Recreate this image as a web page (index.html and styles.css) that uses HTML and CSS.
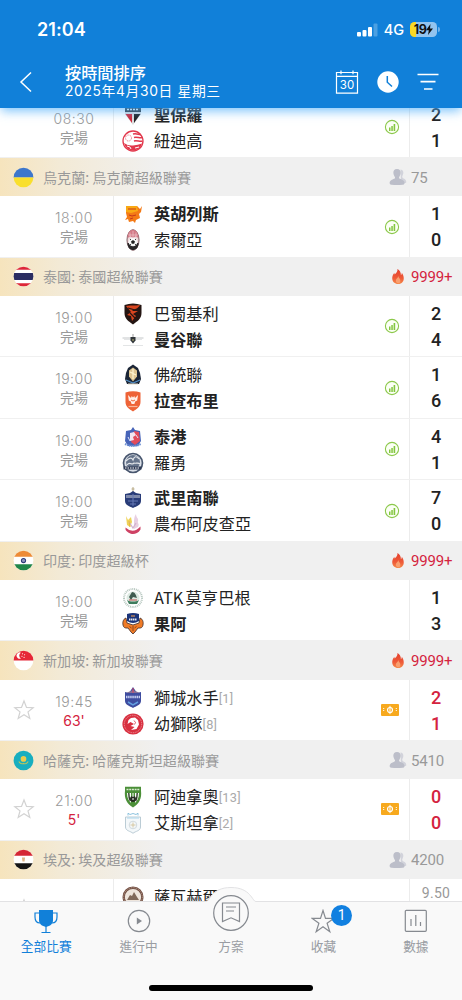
FILE: index.html
```html
<!DOCTYPE html>
<html lang="zh-Hant">
<head>
<meta charset="utf-8">
<title>按時間排序</title>
<link rel="stylesheet" href="styles.css">
</head>
<body>
<svg class="defs" width="0" height="0">
  <defs>
    <clipPath id="disc"><circle cx="10" cy="10" r="9.4"/></clipPath>
    <linearGradient id="flame" x1="0" y1="0" x2="0" y2="1"><stop offset="0" stop-color="#e4402e"/><stop offset=".6" stop-color="#ee5a38"/><stop offset="1" stop-color="#f58a4a"/></linearGradient>
    <symbol id="i-chart" viewBox="0 0 16 16"><circle cx="8" cy="8" r="6.6" fill="#fbfff5" stroke="#8cc84b" stroke-width="1.1"/><path d="M5 8.500h1.500v3.500H5zM7.300 7h1.500v5H7.300zM9.600 5h1.600v7H9.600z" fill="#83c63f"/></symbol>
    <symbol id="i-fire" viewBox="0 0 14 18"><path d="M6.300 1C7 4 4.600 5.300 3.600 7 3.200 6.300 3.100 5.700 3.200 5 1.400 7 .8 9.200.9 11.200 1.100 14.600 3.600 17 7 17s5.900-2.300 6.100-5.700C13.200 8.800 12.300 6.700 11 5c.1 1.200-.2 2-.9 2.500C10.200 4.700 8.800 2.300 6.300 1z" fill="url(#flame)"/><path d="M7.200 8.500c.2 2-2.500 2.700-2.500 5 0 1.600 1 2.700 2.400 2.700s2.500-1.100 2.400-2.800c-.1-2-1.900-2.900-2.300-4.900z" fill="#f9a070"/></symbol>
    <symbol id="i-people" viewBox="0 0 18 18"><path d="M11.500 1.500c3 .2 3.500 3.400 2.100 6-.5 1-.6 2 .4 2.700 1.700.9 3.100 1.300 3.300 3.800 0 .8-.5 1-1.400 1H12z" fill="#d2d3db"/><path d="M8 1c2.800 0 3.900 2 3.600 4.300-.2 1.700-.8 2.700-1.400 3.600-.3.900 0 1.500.7 1.900 2.200 1 4.500 1.400 4.700 4.200 0 1.300-1 1.700-2 1.800-3.500.4-7.500.4-11 0-1-.1-2-.5-2-1.800.2-2.800 2.500-3.200 4.600-4.200.8-.4 1-1 .7-1.900C5.200 8 4.700 7 4.400 5.300 4.100 3 5.200 1 8 1z" fill="#bcbec9"/></symbol>
    <symbol id="i-ticket" viewBox="0 0 18 12"><rect width="18" height="12" rx="1" fill="#f7a91e"/><path d="M2.700 4v4M15.300 4v4" stroke="#fff" stroke-width="1" stroke-dasharray="1 1"/><circle cx="9" cy="6" r="2.500" fill="none" stroke="#fff" stroke-width="1.200"/><path d="M9 1.800v8.400" stroke="#fff" stroke-width="1"/></symbol>
    <symbol id="i-star" viewBox="0 0 22 22"><path d="M11 2l2.500 6.400 6.700.3-5.200 4.200 1.800 6.600L11 15.800l-5.800 3.700L7 12.900 1.800 8.700l6.700-.3z" fill="none" stroke="currentColor" stroke-width="1.200" stroke-linejoin="miter"/></symbol>
  </defs>
</svg>
<div class="app">
  <header class="header">
    <div class="status">
      <span class="clock">21:04</span>
      <div class="signals">
        <svg width="21" height="14" viewBox="0 0 21 14"><g fill="#fff"><rect x="0" y="9" width="4" height="4.500" rx="1"/><rect x="5.500" y="7" width="4" height="6.500" rx="1"/><rect x="11" y="4" width="4" height="9.500" rx="1"/><rect x="16.500" y=".5" width="4" height="13" rx="1" opacity=".25"/></g></svg>
        <span class="net">4G</span>
        <span class="battery"><span class="pct">19</span><svg width="7" height="11" viewBox="0 0 7 11"><path d="M4.500 0L0 6.200h2.800L2 11l5-6.500H4z" fill="#111"/></svg></span><i class="cap"></i>
      </div>
    </div>
    <div class="titlebar">
      <svg class="back" width="14" height="22" viewBox="0 0 14 22"><path d="M12 1.500L2 11l10 9.500" fill="none" stroke="#fff" stroke-width="1.500"/></svg>
      <div class="titles"><div class="title">按時間排序</div><div class="date">2025年4月30日 星期三</div></div>
      <div class="tools">
        <span class="cal"><svg width="24" height="24" viewBox="0 0 24 24"><path d="M1.500 2.500h21v20.700h-21zM1.500 6.400h21M6 .5v3.700M18 .5v3.700" fill="none" stroke="#fff" stroke-width="1.200"/></svg><b>30</b></span>
        <svg width="22" height="22" viewBox="0 0 22 22"><circle cx="11" cy="11" r="10.700" fill="#fff"/><path d="M10.300 5v6.200l4.700 4.300" fill="none" stroke="#1180d9" stroke-width="1.500"/></svg>
        <svg width="22" height="20" viewBox="0 0 22 20"><path d="M.5 2.500h21M3.500 9.700h15M7 17h8.500" stroke="#fff" stroke-width="1.700"/></svg>
      </div>
    </div>
  </header>

  <main class="list">
    <section class="match first"><div class="fav"></div><div class="when"><span>08:30</span><span>完場</span></div>
      <div class="teams">
        <div class="team win"><svg class="crest" viewBox="0 0 22 22"><path d="M3 3h16v7l-8 11L3 10z" fill="#ddd"/><path d="M3 3h16v5H3z" fill="#333"/><path d="M3.500 10H10v9z" fill="#d22739"/><path d="M12 10h6.500L12 19z" fill="#222"/><path d="M5 5.500h12" stroke="#fff" stroke-width="1.500" stroke-dasharray="2 1"/></svg><span>聖保羅</span></div>
        <div class="team"><svg class="crest" viewBox="0 0 22 22"><circle cx="11" cy="11" r="10" fill="#fff" stroke="#e2384c" stroke-width="1.300"/><path d="M2 13q4 3 9 2.500t9-2c-1 4.500-5 7-9 7s-8-3-9-7.500z" fill="#e2384c"/><path d="M11 4c4-1 6 1 8 .5M12 7.500c3-1 6 1 8.500 0M12 11c3-1 6 1 8.500 0" fill="none" stroke="#e2384c" stroke-width="1.700"/><circle cx="6.500" cy="8" r="3" fill="none" stroke="#ec7080" stroke-dasharray="1 .7"/><path d="M5 16l3 1 1 2M13 18l4-1" stroke="#fff" fill="none"/></svg><span>紐迪高</span></div>
      </div><div class="tag"><svg class="chart"><use href="#i-chart"/></svg></div><div class="score"><span>2</span><span>1</span></div></section>

    <div class="league"><svg class="flag" viewBox="0 0 20 20"><g clip-path="url(#disc)"><path fill="#3d77cc" d="M0 0h20v10H0z"/><path fill="#f9df2d" d="M0 10h20v10H0z"/></g></svg><span class="name">烏克蘭: 烏克蘭超級聯賽</span><div class="heat"><svg class="people"><use href="#i-people"/></svg><span>75</span></div></div>
    <section class="match"><div class="fav"></div><div class="when"><span>18:00</span><span>完場</span></div>
      <div class="teams">
        <div class="team win"><svg class="crest" viewBox="0 0 22 22"><path d="M4 3l5 1 6-1 3 3 2-3-1 6-2 2 1 4-4 2-1 3-2-2-4 1-1-3-3 1 2-3-1-4z" fill="#f47a16"/><path d="M4 3h11l1 5-7 2-5-1z" fill="#f9a914"/><path d="M6 6h8M7 12l3 1 4-1M8 16l3-1" stroke="#c8381a" stroke-width="1" fill="none"/></svg><span>英胡列斯</span></div>
        <div class="team"><svg class="crest" viewBox="0 0 22 22"><ellipse cx="11" cy="11" rx="6" ry="10.300" fill="#eed9db" stroke="#806065"/><path d="M5.500 9c0-11 11-11 11 0l-3-1.500-2.500 1-2.500-1z" fill="#d37a87"/><path d="M5.500 14h11c0 5-3 7-5.500 7s-5.500-2-5.500-7z" fill="#292729"/><path d="M6.500 6h9M8 3.500v5M11 2v6M14 3.500v5" stroke="#f4d4d8" stroke-width=".6"/><circle cx="11" cy="13" r="4.300" fill="#f8f8f8"/><path d="M11 11l2 1.500-.8 2.300H9.800L9 12.500z" fill="#222"/><path d="M8 11l1-1M14 11l-1-1M8 16l1-1M14 16l-1-1" stroke="#444"/></svg><span>索爾亞</span></div>
      </div><div class="tag"><svg class="chart"><use href="#i-chart"/></svg></div><div class="score"><span>1</span><span>0</span></div></section>

    <div class="league"><svg class="flag" viewBox="0 0 20 20"><g clip-path="url(#disc)"><path fill="#fff" d="M0 0h20v20H0z"/><path fill="#dd2739" d="M0 0h20v3.500H0zM0 16.500h20V20H0z"/><path fill="#2b2d62" d="M0 6.700h20v6.600H0z"/></g></svg><span class="name">泰國: 泰國超級聯賽</span><div class="heat hot"><svg class="fire"><use href="#i-fire"/></svg><span>9999+</span></div></div>
    <section class="match"><div class="fav"></div><div class="when"><span>19:00</span><span>完場</span></div>
      <div class="teams">
        <div class="team"><svg class="crest" viewBox="0 0 22 22"><path d="M2.500 2Q11-1 19.500 2v8c0 6-4 8-8.500 11.500C6.500 18 2.500 16 2.500 10z" fill="#241512"/><path d="M4 3c5-1 9 0 14-1-2 4-6 4-8 6l6 0-5 3 3 2-4 5-1-5-4-1 4-3z" fill="#d8451f"/><path d="M6 5l7 2M8 10l5 5" stroke="#241512" stroke-width="1.200"/></svg><span>巴蜀基利</span></div>
        <div class="team win"><svg class="crest" viewBox="0 0 22 22"><path d="M.5 9h21" stroke="#b4b8ba" stroke-width=".8"/><path d="M2 10.500h18M1 16.500h20" stroke="#dcdedf" stroke-width=".8"/><path d="M8.500 8h5v3.500L11 14.500l-2.500-3z" fill="#31363a"/><path d="M11 5v3" stroke="#777" stroke-width=".7"/><circle cx="11" cy="11" r="1" fill="#8c8d60"/></svg><span>曼谷聯</span></div>
      </div><div class="tag"><svg class="chart"><use href="#i-chart"/></svg></div><div class="score"><span>2</span><span>4</span></div></section>
    <section class="match"><div class="fav"></div><div class="when"><span>19:00</span><span>完場</span></div>
      <div class="teams">
        <div class="team"><svg class="crest" viewBox="0 0 22 22"><path d="M11 .5l5 3.500 2 5 1 6-2 5H5l-2-5 1-6 2-5z" fill="#1b2536"/><path d="M11 3.500l4 3v6l-4 5-4-5v-6z" fill="#dfc692"/><path d="M11 5v10M8 8l6 3" stroke="#fff5d2" stroke-width="1.200"/><path d="M4 16l7 3 7-3" fill="none" stroke="#528dc3" stroke-width="1.300"/><path d="M6 20h10" stroke="#ded7c6"/></svg><span>佛統聯</span></div>
        <div class="team win"><svg class="crest" viewBox="0 0 22 22"><path d="M3.500 2.500Q11 0 18.500 2.500V12c0 5-4 7-7.500 9.500C7.500 19 3.500 17 3.500 12z" fill="#ee6337"/><path d="M6 5l3 3 .7-2L11 7.500 12.300 6l.7 2 3-3-.8 5.500-2 1-.8 2.500h-2.800l-.8-2.500-2-1z" fill="#fff0e9"/><path d="M6.500 16.500h9" stroke="#f9b79d" stroke-width="1.200"/><path d="M9 10l2 1 2-1" fill="none" stroke="#ee6337"/></svg><span>拉查布里</span></div>
      </div><div class="tag"><svg class="chart"><use href="#i-chart"/></svg></div><div class="score"><span>1</span><span>6</span></div></section>
    <section class="match"><div class="fav"></div><div class="when"><span>19:00</span><span>完場</span></div>
      <div class="teams">
        <div class="team win"><svg class="crest" viewBox="0 0 22 22"><path d="M4 5l5-1 2-3 2 3 5 1 1 10-3 5H6l-3-5z" fill="#4764b8"/><path d="M12 5l5 1 1 9-5 4-4-3z" fill="#e24b5b"/><path d="M8 7l4-1 2 3-3 2 1 3-4 1z" fill="#f3e5f0"/><path d="M6 11l2 4M14 9l2 3" stroke="#dfe4f8"/><path d="M3 18q8 4 16 0" stroke="#7192d4" stroke-width="2" stroke-dasharray="1.500 .6" fill="none"/></svg><span>泰港</span></div>
        <div class="team"><svg class="crest" viewBox="0 0 22 22"><circle cx="11" cy="11" r="9.500" fill="#dbe0e8" stroke="#48566e" stroke-width="1.700"/><circle cx="11" cy="10" r="7" fill="#66748b"/><path d="M4 9q5-5 7-1 2-6 6-1M5 13c3-4 5 1 7-2 2 1 4-1 6 1" stroke="#e5e8ec" stroke-width="1.200" fill="none"/><path d="M1.500 16h18" stroke="#2e3a55" stroke-width="3"/><path d="M3 16h15" stroke="#fff" stroke-width="1" stroke-dasharray="1.500 1"/></svg><span>羅勇</span></div>
      </div><div class="tag"><svg class="chart"><use href="#i-chart"/></svg></div><div class="score"><span>4</span><span>1</span></div></section>
    <section class="match"><div class="fav"></div><div class="when"><span>19:00</span><span>完場</span></div>
      <div class="teams">
        <div class="team win"><svg class="crest" viewBox="0 0 22 22"><path d="M11 0v6M9.500 2h3" stroke="#b0a079" stroke-width=".9"/><path d="M3 7l5-1 3-2 3 2 5 1v7c0 4-4 5-8 7-4-2-8-3-8-7z" fill="#293c78"/><path d="M4 8h14v3H4z" fill="#7f8aab"/><path d="M6 14h10M8 17h6M11 7v12" stroke="#6678b4" stroke-width="1"/></svg><span>武里南聯</span></div>
        <div class="team"><svg class="crest" viewBox="0 0 22 22"><path d="M4 3l2 4 3-3 1 5-2 5-3-2z" fill="#efd256"/><path d="M12 10c0-4 0-6 2-9 0 4 3 4 2 7-1 2 2 3 0 6l-4 2z" fill="#e8cfe2"/><path d="M3.500 14.500q7.500 7 15-1v3c-2 3.500-5 4.500-7.500 4.500s-6.500-2-7.500-4.500z" fill="#ce4164"/><path d="M7 9l4 6 3-5" stroke="#d3b4cf" fill="none" stroke-width="1.300"/><path d="M7 8l1 6" stroke="#e8b93c"/></svg><span>農布阿皮查亞</span></div>
      </div><div class="tag"><svg class="chart"><use href="#i-chart"/></svg></div><div class="score"><span>7</span><span>0</span></div></section>

    <div class="league"><svg class="flag" viewBox="0 0 20 20"><g clip-path="url(#disc)"><path fill="#fff" d="M0 0h20v20H0z"/><path fill="#ed8b36" d="M0 0h20v6.500H0z"/><path fill="#20864a" d="M0 13.500h20V20H0z"/><circle cx="10" cy="10" r="2" fill="#8d96be" stroke="#303d7b"/></g></svg><span class="name">印度: 印度超級杯</span><div class="heat hot"><svg class="fire"><use href="#i-fire"/></svg><span>9999+</span></div></div>
    <section class="match"><div class="fav"></div><div class="when"><span>19:00</span><span>完場</span></div>
      <div class="teams">
        <div class="team"><svg class="crest" viewBox="0 0 22 22"><circle cx="11" cy="11" r="9" fill="none" stroke="#b8c8c0" stroke-width="2" stroke-dasharray="1 .8"/><circle cx="11" cy="11" r="6.500" fill="#dce9e1"/><path d="M5 13c3 2 9 2 12 0l-2 4H7z" fill="#3d7b5c"/><path d="M10 5c3 0 4 3 5 6l-4-1-2 3-2-3z" fill="#405b50"/><path d="M7 13h8" stroke="#bd4c4c"/></svg><span class="latin">ATK<i></i>莫亨巴根</span></div>
        <div class="team win"><svg class="crest" viewBox="0 0 22 22"><path d="M4 5C1 6 0 10 1.500 13.500 2.500 15.500 5 15 6 15l3 4 2 2 2-2 3-4c1 0 3.500.5 4.500-1.500C22 10 21 6 18 5l-1 5-6 2-6-2z" fill="#ef7b27" stroke="#412d2b" stroke-width=".8"/><path d="M5 1q6-2 12 0v7q-6 4-12 0z" fill="#1b3479"/><path d="M7 6.500h8" stroke="#e5e8f3" stroke-width="2" stroke-dasharray="1.500 .5"/><path d="M9 3h4" stroke="#f8a14e"/><path d="M7.500 13.500l2 1.500M14.500 13.500l-2 1.500M11 13v5" stroke="#793716" stroke-width=".8"/></svg><span>果阿</span></div>
      </div><div class="tag"></div><div class="score"><span>1</span><span>3</span></div></section>

    <div class="league"><svg class="flag" viewBox="0 0 20 20"><g clip-path="url(#disc)"><path fill="#fff" d="M0 0h20v20H0z"/><path fill="#e62737" d="M0 0h20v10H0z"/><path d="M7.500 2.500a3 3 0 1 0 0 5.500 3.200 3.200 0 0 1 0-5.500z" fill="#fff"/><path d="M9 3.500h.1M11 4.500h.1M8.500 6h.1M10.500 7h.1" stroke="#fff" stroke-linecap="round"/></g></svg><span class="name">新加坡: 新加坡聯賽</span><div class="heat hot"><svg class="fire"><use href="#i-fire"/></svg><span>9999+</span></div></div>
    <section class="match live"><div class="fav"><svg><use href="#i-star"/></svg></div><div class="when"><span>19:45</span><span>63'</span></div>
      <div class="teams">
        <div class="team"><svg class="crest" viewBox="0 0 22 22"><path d="M3 5l4 1 4-6 4 6 4-1v9c0 4-5 5-8 7-3-2-8-3-8-7z" fill="#3e4c9f"/><path d="M4 6h14L11 3z" fill="#827196"/><path d="M4 10h14" stroke="#c3cdf1" stroke-width="2.500" stroke-dasharray="1.500 .6"/><path d="M6 15l5 3 5-3" stroke="#639fe0" fill="none" stroke-width="1.500"/><path d="M11 1v5" stroke="#d94565"/></svg><span>獅城水手</span><small>[1]</small></div>
        <div class="team"><svg class="crest" viewBox="0 0 22 22"><circle cx="11" cy="11" r="10.600" fill="#d83040"/><circle cx="11" cy="11" r="8.700" fill="none" stroke="#f3a9af" stroke-width=".8" stroke-dasharray="1 .8"/><path d="M9 5l4-.5 3 2.500 1 4.500-2.500 4.500-5.500 1 3.500-3-4-1 3.500-2-3.500-2-3 2 1-4z" fill="#fff"/><path d="M12 7.500l1.500 2-1 2" stroke="#d83040" stroke-width=".8" fill="none"/></svg><span>幼獅隊</span><small>[8]</small></div>
      </div><div class="tag"><svg class="ticket"><use href="#i-ticket"/></svg></div><div class="score"><span>2</span><span>1</span></div></section>

    <div class="league"><svg class="flag" viewBox="0 0 20 20"><g clip-path="url(#disc)"><path fill="#18aebf" d="M0 0h20v20H0z"/><circle cx="10" cy="8.500" r="2.700" fill="#eacb4c"/><path d="M5.500 11c1.500 2.500 3 2.500 4.500 1.800 1.500.7 3 .7 4.500-1.800" stroke="#b9c65c" fill="none" stroke-width="1"/></g></svg><span class="name">哈薩克: 哈薩克斯坦超級聯賽</span><div class="heat"><svg class="people"><use href="#i-people"/></svg><span>5410</span></div></div>
    <section class="match live"><div class="fav"><svg><use href="#i-star"/></svg></div><div class="when"><span>21:00</span><span>5'</span></div>
      <div class="teams">
        <div class="team"><svg class="crest" viewBox="0 0 22 22"><path d="M3 .8h16v4c1 8-2 13-8 16.700C5 17.800 2 12.800 3 4.800z" fill="#4b8f38"/><path d="M5 7c0 5 2 8 4 10V7zM17 7c0 5-2 8-4 10V7z" fill="#fff"/><path d="M6.800 7c0 4 .4 6 1.500 8M15.200 7c0 4-.4 6-1.500 8" stroke="#2b3a24" stroke-width="1.400" fill="none"/><path d="M4.500 3.500h13" stroke="#d8ead0" stroke-width="1.500" stroke-dasharray="2 .7"/><circle cx="11" cy="13" r="3" fill="#252d22"/><path d="M11 7v4M10 13h2" stroke="#fff"/></svg><span>阿迪拿奧</span><small>[13]</small></div>
        <div class="team"><svg class="crest" viewBox="0 0 22 22"><path d="M3.500 5h15v10c0 4-5 4-7.500 6.300C8.500 19 3.500 19 3.500 15z" fill="#f4f8fa" stroke="#b3c6d0" stroke-width=".9"/><path d="M6 3.500V1.200l2 1.300 3-1 3 1 2-1.300v2.300" fill="none" stroke="#82bddb" stroke-width=".9"/><path d="M5 6h12" stroke="#b7dcee" stroke-width="1.200"/><circle cx="11" cy="13" r="3.800" fill="none" stroke="#cdd6da" stroke-width=".9"/><path d="M11 10.500v5M8.500 13h5" stroke="#d4c49a" stroke-width=".9"/></svg><span>艾斯坦拿</span><small>[2]</small></div>
      </div><div class="tag"><svg class="ticket"><use href="#i-ticket"/></svg></div><div class="score"><span>0</span><span>0</span></div></section>

    <div class="league"><svg class="flag" viewBox="0 0 20 20"><g clip-path="url(#disc)"><path fill="#fff" d="M0 0h20v20H0z"/><path fill="#d52736" d="M0 0h20v6.500H0z"/><path fill="#151515" d="M0 13.500h20V20H0z"/><path fill="#dfb58a" d="M8.500 8h3l-.5 4h-2z"/></g></svg><span class="name">埃及: 埃及超级聯賽</span><div class="heat"><svg class="people"><use href="#i-people"/></svg><span>4200</span></div></div>
    <section class="match"><div class="fav"><svg><use href="#i-star"/></svg></div><div class="when"></div>
      <div class="teams">
        <div class="team"><svg class="crest" viewBox="0 0 22 22"><circle cx="11" cy="11" r="9.300" fill="#eee5dc" stroke="#735044" stroke-width="2.400"/><circle cx="11" cy="11" r="9.300" fill="none" stroke="#c6ad9e" stroke-width=".8" stroke-dasharray="1 .8"/><path d="M5 14l3-5 2 1 2-4 3 5 2 3z" fill="#80695a"/></svg><span>薩瓦赫爾</span></div>
      </div><div class="tag"></div><div class="odds"><span>9.50</span></div></section>
  </main>

  <nav class="tabs">
    <div class="tab on"><svg width="24" height="26" viewBox="0 0 24 26"><path d="M5 1h14v10c0 4-3 6-7 7-4-1-7-3-7-7z" fill="#1180d9"/><path d="M5 4H1v4c0 4 2 6 5 6M19 4h4v4c0 4-2 6-5 6M12 17v6M7.500 23.500h9" fill="none" stroke="#1180d9" stroke-width="1.200"/></svg><span>全部比賽</span></div>
    <div class="tab"><svg width="24" height="26" viewBox="0 0 24 26"><circle cx="12" cy="12" r="10.700" fill="none" stroke="#868a90" stroke-width="1.200"/><path d="M9.800 8.500v7l5.200-3.500z" fill="#868a90"/></svg><span>進行中</span></div>
    <div class="tab mid"><div class="bump"><svg width="50" height="26" viewBox="0 0 50 26"><path d="M0 14.500C4 14.500 5 .5 25 .5S46 14.500 50 14.500V26H0z" fill="#f9f9f9"/><path d="M0 14.500C4 14.500 5 .5 25 .5S46 14.500 50 14.500" fill="none" stroke="#e2e2e4"/></svg><svg class="ring" width="38" height="38" viewBox="0 0 38 38"><circle cx="19" cy="19" r="17.300" fill="none" stroke="#868a90" stroke-width="1.200"/><path d="M10.500 9h17v18.500L19 23.800l-8.500 3.700zM14 13h10M14 17h8" fill="none" stroke="#868a90" stroke-width="1.200"/></svg></div><span>方案</span></div>
    <div class="tab"><svg width="24" height="26" viewBox="0 0 24 26"><path d="M12 1.500l2.500 7.900h8.200l-6.600 4.900 2.700 8.400-6.800-5-6.800 5 2.700-8.400-6.600-4.900h8.200z" fill="none" stroke="#868a90" stroke-width="1.200"/></svg><em>1</em><span>收藏</span></div>
    <div class="tab"><svg width="24" height="26" viewBox="0 0 24 26"><rect x="1.300" y="1.300" width="21" height="21" rx="1" fill="none" stroke="#868a90" stroke-width="1.200"/><path d="M7 10v7M11.800 6v11M16.500 13v4" stroke="#868a90" stroke-width="1.200"/></svg><span>數據</span></div>
    <div class="home"></div>
  </nav>
</div>
</body>
</html>
```
FILE: styles.css
```css
* { box-sizing: border-box; }
body { margin: 0; font-family: Inter, "Noto Sans CJK TC", sans-serif; }
svg { display: block; flex: none; }
.defs { position: absolute; }
.app { display: flex; flex-direction: column; width: 462px; height: 1000px; overflow: hidden; background: #fff; }

/* header */
.header { position: relative; z-index: 2; flex: none; height: 108px; background: #1180d9; color: #fff; box-shadow: 0 4px 10px -1px rgba(80, 175, 250, .75); }
.status { display: flex; justify-content: space-between; align-items: center; height: 59px; padding: 0 22px 0 37px; }
.clock { font-size: 18px; font-weight: 600; letter-spacing: .1px; }
.signals { display: flex; align-items: center; }
.net { margin: 0 6px 0 6px; font-size: 14.500px; font-weight: 500; }
.battery { display: flex; align-items: center; justify-content: center; width: 27px; height: 15px; border-radius: 4.500px; background: linear-gradient(90deg, #fbd824 0 6px, #93c4ef 6px); color: #111; }
.pct { font-size: 12.500px; font-weight: 700; letter-spacing: -.4px; }
.cap { width: 2px; height: 5px; margin-left: 1px; border-radius: 0 2px 2px 0; background: #72b1e9; }
.titlebar { display: flex; align-items: center; height: 45px; padding: 0 23px 0 19px; }
.titles { flex: 1; margin-left: 32px; }
.title { font: 500 16.200px/19px "Noto Sans CJK TC", sans-serif; }
.date { font-size: 13.800px; line-height: 19px; letter-spacing: .65px; white-space: nowrap; }
.tools { display: flex; align-items: center; gap: 18px; }
.cal { position: relative; }
.cal b { position: absolute; left: 0; top: 8px; width: 24px; text-align: center; font-size: 11.500px; line-height: 14px; font-weight: 400; }

/* fixtures */
.list { flex: 1; min-height: 0; overflow: hidden; }
.league { display: flex; align-items: center; height: 38.100px; padding-left: 13px; background: linear-gradient(90deg, #f6e4bd 0, #f3ead6 60px, #f0f0f0 160px); color: #999; }
.flag { width: 21px; height: 21px; }
.name { flex: 1; margin: -1px 0 0 9px; font: 400 14.100px/20px "Noto Sans CJK TC", sans-serif; }
.heat { display: flex; align-items: center; width: 74px; padding-left: 1px; font: 400 15px/20px Roboto, sans-serif; letter-spacing: -.15px; }
.heat span { padding-top: 1px; }
.people { width: 18px; height: 18px; margin: 0 4px 0 0; }
.hot { color: #d4233e; }
.fire { width: 14px; height: 17px; margin: 0 6px 0 2px; }
.match { display: flex; height: 61.500px; border-bottom: 1px solid #f0f0f0; background: #fff; }
.match.first { margin-top: -11.300px; }
.fav { display: flex; align-items: center; justify-content: center; width: 47px; color: #d2d2d2; }
.fav svg { width: 22px; height: 22px; }
.when { display: flex; flex-direction: column; width: 67px; padding: 12px 12px 0 0; border-right: 1px solid #ececec; text-align: center; font-size: 14px; line-height: 19px; color: #999; }
.when span { white-space: nowrap; }
.when span:first-child { font-weight: 350; letter-spacing: .5px; }
.live .when span:last-child { color: #d4233e; }
.teams { flex: 1; padding-top: 5px; }
.team { display: flex; align-items: center; height: 26px; padding-left: 8px; font: 400 16.200px/24px "Noto Sans CJK TC", sans-serif; color: #222; white-space: nowrap; }
.team span { margin-top: -2px; }
.team i { display: inline-block; width: 2px; }
.latin { letter-spacing: .15px; }
.win { font-weight: 700; }
.crest { width: 22px; height: 22px; margin-right: 10px; }
.team small { padding-top: 2px; font: 400 12.800px/18px Roboto, sans-serif; letter-spacing: .2px; color: #aaa; }
.tag { display: flex; align-items: center; justify-content: center; width: 37px; padding-left: 2px; border-right: 1px solid #ececec; }
.chart { width: 16px; height: 16px; }
.ticket { width: 18px; height: 12px; margin-right: 4px; }
.score { display: flex; flex-direction: column; width: 52px; padding-top: 5px; text-align: center; font: 500 18px/26px Roboto, sans-serif; color: #222; }
.live .score { color: #d4233e; }
.odds { width: 52px; padding-top: 5px; text-align: center; font: 400 14px/19px Roboto, sans-serif; letter-spacing: .3px; color: #999; }

/* tab bar */
.tabs { position: relative; flex: none; display: flex; height: 99px; background: #f9f9f9; border-top: 1px solid #e2e2e4; }
.tab { position: relative; flex: 1; display: flex; flex-direction: column; align-items: center; padding-top: 7px; font: 400 12.700px/18px "Noto Sans CJK TC", sans-serif; color: #9a9da3; }
.tab span { margin-top: 2px; }
.on { color: #1180d9; }
.bump { position: absolute; left: 50%; top: -15px; width: 50px; margin-left: -25px; }
.ring { position: absolute; left: 6px; top: 7px; }
.mid { padding-top: 33px; }
.tab em { position: absolute; left: 54px; top: 3px; width: 21px; height: 21px; border-radius: 50%; background: #1180e0; color: #fff; font: 400 14px/21px Roboto, sans-serif; text-align: center; }
.home { position: absolute; left: 149px; top: 83px; width: 164px; height: 6px; border-radius: 3px; background: #000; }
```
